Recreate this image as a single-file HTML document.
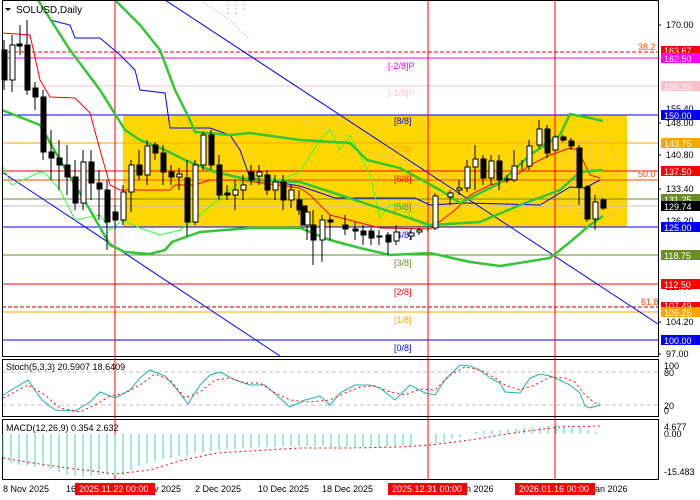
<!DOCTYPE html>
<html><head><meta charset="utf-8"><style>
html,body{margin:0;padding:0;background:#fff;width:700px;height:500px;overflow:hidden}
svg{display:block;font-family:"Liberation Sans",sans-serif}
</style></head><body>
<svg width="700" height="500" xmlns="http://www.w3.org/2000/svg" font-size="9">
<rect width="700" height="500" fill="#fff"/>
<rect x="123" y="115" width="504" height="112" fill="#FFD700"/>
<g stroke="#e8b0b0" stroke-width="1" stroke-dasharray="2,2" fill="none">
<path d="M200 0 L215 10 L230 20 L250 40 M228 0V15 M236 0V15 M244 0V12"/>
<path d="M520 140 H610 L615 160 L620 200 L615 215 L600 218 L560 210 M560 140V210 M570 140V210 M580 140V215 M590 140V215 M600 140V215"/>
<path d="M300 120 L330 130 L360 150 L400 160 L440 175 L470 185 L500 190"/>
</g>
<g stroke-width="1" fill="none">
<line x1="2" y1="52" x2="658" y2="52" stroke="#f00" stroke-dasharray="4,2"/>
<line x1="2" y1="58" x2="658" y2="58" stroke="#f0f"/>
<line x1="2" y1="86" x2="658" y2="86" stroke="#ffc0cb"/>
<line x1="2" y1="115" x2="658" y2="115" stroke="#00f"/>
<line x1="2" y1="143" x2="658" y2="143" stroke="#ffa500"/>
<line x1="2" y1="171" x2="658" y2="171" stroke="#f00"/>
<line x1="2" y1="180" x2="658" y2="180" stroke="#ff4500"/>
<line x1="2" y1="199" x2="658" y2="199" stroke="#6b8e23"/>
<line x1="2" y1="206" x2="658" y2="206" stroke="#c0c0c0"/>
<line x1="2" y1="227" x2="658" y2="227" stroke="#00f"/>
<line x1="2" y1="255" x2="658" y2="255" stroke="#6b8e23"/>
<line x1="2" y1="284" x2="658" y2="284" stroke="#f00"/>
<line x1="2" y1="307" x2="658" y2="307" stroke="#a00" stroke-dasharray="4,2"/>
<line x1="2" y1="312" x2="658" y2="312" stroke="#ffa500"/>
<line x1="2" y1="340" x2="658" y2="340" stroke="#00f"/>
</g>
<g font-size="9">
<text x="388" y="69" fill="#f0f">[-2/8]P</text>
<text x="388" y="96" fill="#ffc0cb">[-1/8]P</text>
<text x="394" y="124" fill="#00f">[8/8]</text>
<text x="394" y="152" fill="#ffa500">[7/8]</text>
<text x="394" y="182" fill="#f00">[6/8]</text>
<text x="394" y="210" fill="#6b8e23">[5/8]</text>
<text x="394" y="238" fill="#00f">[4/8]</text>
<text x="394" y="266" fill="#6b8e23">[3/8]</text>
<text x="394" y="295" fill="#f00">[2/8]</text>
<text x="394" y="323" fill="#ffa500">[1/8]</text>
<text x="394" y="351" fill="#00f">[0/8]</text>
<text x="638" y="50" fill="#ff4500">38.2</text>
<text x="638" y="177" fill="#ff4500">50.0</text>
<text x="641" y="305" fill="#ff4500">61.8</text>
</g>
<g stroke="#00f" stroke-width="1" fill="none">
<line x1="165" y1="0" x2="658" y2="324"/>
<line x1="2" y1="172" x2="280" y2="356"/>
</g>
<g stroke="#f00" stroke-width="1">
<line x1="115" y1="0" x2="115" y2="480"/>
<line x1="428" y1="0" x2="428" y2="480"/>
<line x1="555" y1="0" x2="555" y2="480"/>
</g>
<polyline fill="none" stroke="#00f" stroke-width="1" points="50,20 70,25 75,38 100,38 120,55 135,70 140,90 165,93 170,128 210,128 230,135 240,150 250,178 300,186 335,198 415,198 430,205 465,203 540,205 570,187 585,188 600,180"/>
<polyline fill="none" stroke="#f00" stroke-width="1" points="2,33 30,35 40,80 50,97 75,98 90,113 100,150 110,185 120,190 170,190 175,185 195,185 210,180 240,180 300,188 310,195 330,215 380,228 430,229 455,210 470,195 490,185 510,180 530,165 550,155 570,148 578,150 590,175 600,178"/>
<polyline fill="none" stroke="#3f3" stroke-width="1" points="2,165 12,185 40,172 45,173 60,190 75,220 100,215 110,230 123,220 140,228 160,235 180,230 200,215 230,190 250,175 280,180 300,172 320,140 330,130 340,150 350,135 370,175 380,218 390,205 400,205 415,220 430,228"/>
<g fill="none" stroke="#33c733" stroke-width="2.5">
<polyline points="115,0 140,25 160,50 175,90 190,120 195,132 230,135 250,133 300,140 350,143 367,160 400,168 440,190 460,203 480,193 500,183 530,155 560,135 570,114 590,118 603,121"/>
<polyline points="38,0 70,50 100,90 125,130 140,140 165,150 185,160 215,172 250,180 300,182 340,195 370,205 400,215 430,225 480,222 520,205 560,190 580,172 603,170"/>
<polyline points="2,110 40,125 60,160 90,210 110,245 125,252 150,254 165,250 172,242 200,232 250,228 300,228 330,240 360,248 390,255 430,253 470,262 500,266 550,258 570,242 590,225 603,216"/>
</g>
<g stroke="#000" stroke-width="1">
<line x1="4" y1="40" x2="4" y2="90"/><line x1="12" y1="35" x2="12" y2="92"/><line x1="20" y1="25" x2="20" y2="55"/><line x1="27" y1="20" x2="27" y2="95"/><line x1="35" y1="82" x2="35" y2="110"/><line x1="43" y1="90" x2="43" y2="160"/><line x1="51" y1="130" x2="51" y2="180"/><line x1="59" y1="140" x2="59" y2="190"/><line x1="67" y1="145" x2="67" y2="195"/><line x1="75" y1="160" x2="75" y2="210"/><line x1="83" y1="150" x2="83" y2="210"/><line x1="91" y1="150" x2="91" y2="200"/><line x1="99" y1="170" x2="99" y2="220"/><line x1="107" y1="180" x2="107" y2="250"/><line x1="115" y1="205" x2="115" y2="230"/><line x1="123" y1="185" x2="123" y2="225"/><line x1="131" y1="160" x2="131" y2="212"/><line x1="139" y1="150" x2="139" y2="180"/><line x1="147" y1="140" x2="147" y2="185"/><line x1="155" y1="142" x2="155" y2="160"/><line x1="163" y1="145" x2="163" y2="185"/><line x1="171" y1="165" x2="171" y2="185"/><line x1="179" y1="168" x2="179" y2="190"/><line x1="187" y1="160" x2="187" y2="236"/><line x1="195" y1="160" x2="195" y2="225"/><line x1="203" y1="132" x2="203" y2="170"/><line x1="211" y1="130" x2="211" y2="170"/><line x1="219" y1="155" x2="219" y2="200"/><line x1="227" y1="185" x2="227" y2="200"/><line x1="235" y1="180" x2="235" y2="210"/><line x1="243" y1="175" x2="243" y2="200"/><line x1="251" y1="165" x2="251" y2="185"/><line x1="259" y1="165" x2="259" y2="185"/><line x1="267" y1="170" x2="267" y2="195"/><line x1="275" y1="175" x2="275" y2="200"/><line x1="283" y1="175" x2="283" y2="210"/><line x1="291" y1="185" x2="291" y2="208"/><line x1="299" y1="190" x2="299" y2="215"/><line x1="307" y1="205" x2="307" y2="240"/><line x1="313" y1="210" x2="313" y2="265"/><line x1="322" y1="215" x2="322" y2="262"/><line x1="330" y1="215" x2="330" y2="240"/><line x1="345" y1="215" x2="345" y2="235"/><line x1="355" y1="222" x2="355" y2="240"/><line x1="363" y1="225" x2="363" y2="245"/><line x1="371" y1="228" x2="371" y2="245"/><line x1="379" y1="230" x2="379" y2="245"/><line x1="388" y1="232" x2="388" y2="255"/><line x1="396" y1="225" x2="396" y2="245"/><line x1="411" y1="228" x2="411" y2="240"/><line x1="419" y1="228" x2="419" y2="235"/><line x1="428" y1="226" x2="428" y2="232"/><line x1="435" y1="193" x2="435" y2="230"/><line x1="450" y1="190" x2="450" y2="205"/><line x1="459" y1="180" x2="459" y2="195"/><line x1="467" y1="160" x2="467" y2="192"/><line x1="475" y1="145" x2="475" y2="190"/><line x1="483" y1="155" x2="483" y2="185"/><line x1="491" y1="155" x2="491" y2="185"/><line x1="499" y1="155" x2="499" y2="190"/><line x1="507" y1="175" x2="507" y2="183"/><line x1="514" y1="150" x2="514" y2="182"/><line x1="522" y1="160" x2="522" y2="170"/><line x1="529" y1="140" x2="529" y2="170"/><line x1="539" y1="120" x2="539" y2="148"/><line x1="547" y1="125" x2="547" y2="158"/><line x1="555" y1="135" x2="555" y2="152"/><line x1="563" y1="135" x2="563" y2="142"/><line x1="571" y1="138" x2="571" y2="150"/><line x1="579" y1="145" x2="579" y2="205"/><line x1="587" y1="185" x2="587" y2="222"/><line x1="595" y1="195" x2="595" y2="230"/><line x1="603" y1="198" x2="603" y2="210"/>
</g>
<g stroke="#000" stroke-width="1">
<rect x="2" y="50" width="5" height="30" fill="#000"/><rect x="10" y="45" width="5" height="35" fill="#fff"/><rect x="17" y="44" width="5" height="2" fill="#000"/><rect x="25" y="45" width="5" height="45" fill="#000"/><rect x="33" y="88" width="5" height="9" fill="#000"/><rect x="41" y="97" width="5" height="55" fill="#000"/><rect x="49" y="152" width="5" height="6" fill="#000"/><rect x="57" y="158" width="5" height="7" fill="#000"/><rect x="65" y="165" width="5" height="12" fill="#000"/><rect x="73" y="177" width="5" height="26" fill="#000"/><rect x="81" y="162" width="5" height="41" fill="#fff"/><rect x="89" y="162" width="5" height="21" fill="#000"/><rect x="97" y="183" width="5" height="6" fill="#000"/><rect x="105" y="190" width="5" height="32" fill="#000"/><rect x="113" y="212" width="5" height="8" fill="#000"/><rect x="121" y="192" width="5" height="28" fill="#fff"/><rect x="129" y="165" width="5" height="27" fill="#fff"/><rect x="137" y="165" width="5" height="10" fill="#000"/><rect x="145" y="146" width="5" height="29" fill="#fff"/><rect x="153" y="145" width="5" height="8" fill="#000"/><rect x="161" y="153" width="5" height="19" fill="#000"/><rect x="169" y="172" width="5" height="5" fill="#000"/><rect x="177" y="174" width="5" height="3" fill="#fff"/><rect x="185" y="178" width="5" height="44" fill="#000"/><rect x="193" y="165" width="5" height="57" fill="#fff"/><rect x="201" y="135" width="5" height="30" fill="#fff"/><rect x="209" y="135" width="5" height="30" fill="#000"/><rect x="217" y="165" width="5" height="30" fill="#000"/><rect x="225" y="193" width="5" height="2" fill="#000"/><rect x="233" y="190" width="5" height="5" fill="#fff"/><rect x="241" y="185" width="5" height="5" fill="#fff"/><rect x="249" y="172" width="5" height="8" fill="#000"/><rect x="257" y="172" width="5" height="4" fill="#fff"/><rect x="265" y="175" width="5" height="15" fill="#000"/><rect x="273" y="182" width="5" height="8" fill="#fff"/><rect x="281" y="182" width="5" height="18" fill="#000"/><rect x="289" y="190" width="5" height="10" fill="#fff"/><rect x="297" y="200" width="5" height="10" fill="#000"/><rect x="301" y="206" width="5" height="19" fill="#000"/><rect x="305" y="212" width="5" height="13" fill="#fff"/><rect x="311" y="225" width="5" height="15" fill="#000"/><rect x="320" y="220" width="5" height="20" fill="#fff"/><rect x="328" y="220" width="5" height="2" fill="#000"/><rect x="343" y="225" width="5" height="4" fill="#000"/><rect x="353" y="229" width="5" height="2" fill="#000"/><rect x="361" y="231" width="5" height="4" fill="#000"/><rect x="369" y="231" width="5" height="7" fill="#000"/><rect x="377" y="236" width="5" height="1" fill="#000"/><rect x="386" y="235" width="5" height="7" fill="#000"/><rect x="394" y="232" width="5" height="9" fill="#fff"/><rect x="409" y="233" width="5" height="3" fill="#fff"/><rect x="417" y="230" width="5" height="2" fill="#fff"/><rect x="433" y="196" width="5" height="32" fill="#fff"/><rect x="448" y="193" width="5" height="4" fill="#fff"/><rect x="457" y="188" width="5" height="2" fill="#fff"/><rect x="465" y="167" width="5" height="21" fill="#fff"/><rect x="473" y="159" width="5" height="8" fill="#fff"/><rect x="481" y="159" width="5" height="19" fill="#000"/><rect x="489" y="161" width="5" height="17" fill="#fff"/><rect x="497" y="161" width="5" height="19" fill="#000"/><rect x="505" y="179" width="5" height="1" fill="#000"/><rect x="512" y="166" width="5" height="14" fill="#fff"/><rect x="527" y="146" width="5" height="20" fill="#fff"/><rect x="537" y="129" width="5" height="16" fill="#fff"/><rect x="545" y="129" width="5" height="24" fill="#000"/><rect x="553" y="137" width="5" height="13" fill="#fff"/><rect x="561" y="137" width="5" height="3" fill="#000"/><rect x="569" y="141" width="5" height="5" fill="#000"/><rect x="577" y="148" width="5" height="39" fill="#000"/><rect x="585" y="187" width="5" height="32" fill="#000"/><rect x="593" y="202" width="5" height="17" fill="#fff"/><rect x="601" y="200" width="5" height="8" fill="#000"/>
</g>
<path d="M5 8 L11 8 L8 11 Z" fill="#000"/>
<text x="16" y="13" font-size="10" fill="#000">SOLUSD,Daily</text>
<g fill="none" stroke="#000" stroke-width="1">
<rect x="2.5" y="0.5" width="656" height="356"/>
<rect x="2.5" y="359.5" width="656" height="57"/>
<rect x="2.5" y="419.5" width="656" height="60"/>
</g>
<g stroke="#c0c0c0" stroke-dasharray="4,3"><line x1="3" y1="372" x2="658" y2="372"/><line x1="3" y1="405" x2="658" y2="405"/></g>
<text x="6" y="370" font-size="9">Stoch(5,3,3) 20.5907 18.6409</text>
<polyline fill="none" stroke="#20b2aa" stroke-width="1" points="3,395 28,380 42,400 55,410 75,411 90,402 100,392 115,398 130,390 140,378 150,370 165,376 175,387 188,404 200,385 210,375 220,372 235,380 250,385 265,385 290,407 305,400 320,396 330,405 340,393 355,385 370,385 380,388 395,400 410,385 425,393 435,395 445,380 455,370 460,365 470,366 480,370 490,378 500,383 505,392 520,393 530,378 540,374 550,376 560,380 570,385 580,393 585,406 590,408 600,405"/>
<polyline fill="none" stroke="#f00" stroke-width="1" stroke-dasharray="2,3" points="3,398 28,385 45,395 60,408 80,412 95,405 110,396 125,393 140,385 155,374 170,380 185,398 200,392 215,380 230,378 245,383 260,383 275,393 290,400 310,402 330,400 345,393 360,387 375,386 390,392 405,395 420,389 435,390 450,375 465,367 480,370 495,378 505,385 520,390 535,385 550,377 565,378 575,382 585,395 595,403 600,404"/>
<text x="6" y="431" font-size="9">MACD(12,26,9) 0.354 2.632</text>
<g stroke="#40d0c0" stroke-width="1">
<line x1="3" y1="434" x2="3" y2="457"/><line x1="11" y1="434" x2="11" y2="463"/><line x1="19" y1="434" x2="19" y2="465"/><line x1="27" y1="434" x2="27" y2="466"/><line x1="35" y1="434" x2="35" y2="467"/><line x1="43" y1="434" x2="43" y2="467"/><line x1="51" y1="434" x2="51" y2="469"/><line x1="59" y1="434" x2="59" y2="472"/><line x1="67" y1="434" x2="67" y2="475"/><line x1="75" y1="434" x2="75" y2="476"/><line x1="83" y1="434" x2="83" y2="477"/><line x1="91" y1="434" x2="91" y2="476"/><line x1="99" y1="434" x2="99" y2="475"/><line x1="107" y1="434" x2="107" y2="475"/><line x1="115" y1="434" x2="115" y2="475"/><line x1="123" y1="434" x2="123" y2="475"/><line x1="131" y1="434" x2="131" y2="470"/><line x1="139" y1="434" x2="139" y2="466"/><line x1="147" y1="434" x2="147" y2="463"/><line x1="155" y1="434" x2="155" y2="461"/><line x1="163" y1="434" x2="163" y2="459"/><line x1="171" y1="434" x2="171" y2="458"/><line x1="179" y1="434" x2="179" y2="456"/><line x1="187" y1="434" x2="187" y2="455"/><line x1="195" y1="434" x2="195" y2="453"/><line x1="203" y1="434" x2="203" y2="452"/><line x1="211" y1="434" x2="211" y2="451"/><line x1="219" y1="434" x2="219" y2="450"/><line x1="227" y1="434" x2="227" y2="449"/><line x1="235" y1="434" x2="235" y2="449"/><line x1="243" y1="434" x2="243" y2="448"/><line x1="251" y1="434" x2="251" y2="448"/><line x1="259" y1="434" x2="259" y2="447"/><line x1="267" y1="434" x2="267" y2="447"/><line x1="275" y1="434" x2="275" y2="447"/><line x1="283" y1="434" x2="283" y2="446"/><line x1="291" y1="434" x2="291" y2="446"/><line x1="299" y1="434" x2="299" y2="446"/><line x1="307" y1="434" x2="307" y2="446"/><line x1="315" y1="434" x2="315" y2="446"/><line x1="323" y1="434" x2="323" y2="446"/><line x1="331" y1="434" x2="331" y2="447"/><line x1="339" y1="434" x2="339" y2="447"/><line x1="347" y1="434" x2="347" y2="447"/><line x1="355" y1="434" x2="355" y2="447"/><line x1="363" y1="434" x2="363" y2="447"/><line x1="371" y1="434" x2="371" y2="447"/><line x1="379" y1="434" x2="379" y2="447"/><line x1="387" y1="434" x2="387" y2="447"/><line x1="395" y1="434" x2="395" y2="447"/><line x1="403" y1="434" x2="403" y2="446"/><line x1="411" y1="434" x2="411" y2="446"/><line x1="436" y1="434" x2="436" y2="443"/><line x1="444" y1="434" x2="444" y2="442"/><line x1="452" y1="434" x2="452" y2="439"/><line x1="460" y1="434" x2="460" y2="437"/><line x1="476" y1="432" x2="476" y2="434"/><line x1="484" y1="431" x2="484" y2="434"/><line x1="492" y1="430" x2="492" y2="434"/><line x1="500" y1="430" x2="500" y2="434"/><line x1="508" y1="429" x2="508" y2="434"/><line x1="516" y1="429" x2="516" y2="434"/><line x1="524" y1="428" x2="524" y2="434"/><line x1="532" y1="428" x2="532" y2="434"/><line x1="540" y1="427" x2="540" y2="434"/><line x1="548" y1="426" x2="548" y2="434"/><line x1="556" y1="425" x2="556" y2="434"/><line x1="564" y1="425" x2="564" y2="434"/><line x1="572" y1="426" x2="572" y2="434"/><line x1="580" y1="427" x2="580" y2="434"/><line x1="588" y1="430" x2="588" y2="434"/><line x1="596" y1="432" x2="596" y2="434"/>
</g>
<polyline fill="none" stroke="#f00" stroke-width="1" stroke-dasharray="2,3" points="3,458 33,463 67,468 100,472 115,474 150,470 183,460 217,453 267,450 300,448 350,448 400,447 430,445 470,440 520,432 560,427 600,426"/>
<g font-size="9" fill="#000">
<line x1="658" y1="25" x2="661" y2="25" stroke="#000"/><text x="666" y="28">170.00</text>
<line x1="658" y1="123" x2="661" y2="123" stroke="#000"/><text x="666" y="126">148.00</text>
<line x1="658" y1="155" x2="661" y2="155" stroke="#000"/><text x="666" y="158">140.80</text>
<line x1="658" y1="189" x2="661" y2="189" stroke="#000"/><text x="666" y="192">133.40</text>
<text x="666" y="224">126.20</text>
<text x="666" y="112">155.40</text>
<text x="666" y="290">111.00</text>
<line x1="658" y1="322" x2="661" y2="322" stroke="#000"/><text x="666" y="325">104.20</text>
<line x1="658" y1="354" x2="661" y2="354" stroke="#000"/><text x="666" y="357">97.00</text>
<text x="664" y="369">100</text><text x="664" y="376">80</text>
<text x="664" y="409">20</text><text x="664" y="414">0</text>
<text x="664" y="430">4.677</text><text x="664" y="437">0.00</text>
<text x="664" y="475">-15.483</text>
</g>
<g font-size="9">
<rect x="661" y="46" width="39" height="10" fill="#f00"/><text x="664" y="54" fill="#fff">163.67</text>
<rect x="661" y="53" width="39" height="10" fill="#f0f"/><text x="664" y="62" fill="#fff">162.50</text>
<rect x="661" y="81" width="39" height="10" fill="#ffc0cb"/><text x="664" y="90" fill="#fff">156.25</text>
<rect x="661" y="110" width="39" height="10" fill="#00f"/><text x="664" y="119" fill="#fff">150.00</text>
<rect x="661" y="138" width="39" height="10" fill="#ffa500"/><text x="664" y="147" fill="#fff">143.75</text>
<rect x="661" y="166" width="39" height="10" fill="#f00"/><text x="664" y="175" fill="#fff">137.50</text>
<rect x="661" y="194" width="39" height="10" fill="#6b8e23"/><text x="664" y="203" fill="#fff">131.25</text>
<rect x="661" y="201" width="39" height="10" fill="#000"/><text x="664" y="210" fill="#fff">129.74</text>
<rect x="661" y="222" width="39" height="10" fill="#00f"/><text x="664" y="231" fill="#fff">125.00</text>
<rect x="661" y="250" width="39" height="10" fill="#6b8e23"/><text x="664" y="259" fill="#fff">118.75</text>
<rect x="661" y="279" width="39" height="10" fill="#f00"/><text x="664" y="288" fill="#fff">112.50</text>
<rect x="661" y="302" width="39" height="8" fill="#f00"/><text x="664" y="309" fill="#fff">107.49</text>
<rect x="661" y="307" width="39" height="10" fill="#ffa500"/><text x="664" y="316" fill="#fff">106.25</text>
<rect x="661" y="335" width="39" height="10" fill="#00f"/><text x="664" y="344" fill="#fff">100.00</text>
</g>
<g font-size="9" fill="#000">
<text x="3" y="492">8 Nov 2025</text>
<text x="66" y="492">16</text>
<text x="154" y="492">v 2025</text>
<text x="195" y="492">2 Dec 2025</text>
<text x="258" y="492">10 Dec 2025</text>
<text x="322" y="492">18 Dec 2025</text>
<text x="466" y="492">n 2026</text>
<text x="595" y="492">an 2026</text>
</g>
<rect x="75" y="483" width="80" height="12" fill="#f00"/><text x="79" y="492" font-size="9" fill="#fff">2025.11.22 00:00</text>
<rect x="388" y="483" width="79" height="12" fill="#f00"/><text x="392" y="492" font-size="9" fill="#fff">2025.12.31 00:00</text>
<rect x="515" y="483" width="80" height="12" fill="#f00"/><text x="519" y="492" font-size="9" fill="#fff">2026.01.16 00:00</text>
</svg>
</body></html>
